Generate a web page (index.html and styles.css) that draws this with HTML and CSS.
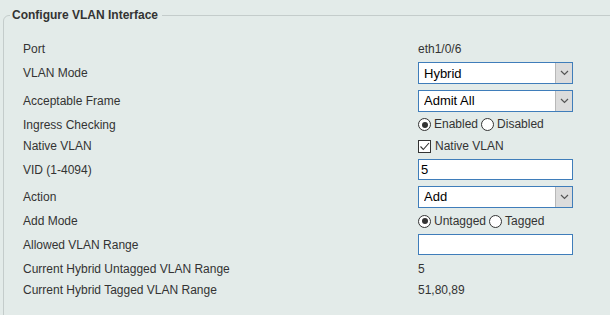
FILE: index.html
```html
<!DOCTYPE html>
<html>
<head>
  <title>Configure VLAN Interface</title>
  <link rel="stylesheet" href="styles.css">
</head>
<body>
  <fieldset class="panel">
    <legend class="panelTitle">Configure VLAN Interface</legend>
    <div class="rows">
      <!-- Port -->
      <div class="row">
        <span class="label">Port</span>
        <span class="value">eth1/0/6</span>
      </div>
      <div class="row">
        <span class="label">VLAN Mode</span>
        <div class="dropdown">
          <select><option>Hybrid</option><option>Access</option><option>Trunk</option></select>
          <span class="dropBtn"><svg width="9" height="6" viewBox="0 0 9 6"><path d="M1 1 L4.5 4.5 L8 1" fill="none" stroke="#555" stroke-width="1.2"/></svg></span>
        </div>
      </div>
      <div class="row">
        <span class="label">Acceptable Frame</span>
        <div class="dropdown">
          <select><option>Admit All</option><option>Tagged Only</option></select>
          <span class="dropBtn"><svg width="9" height="6" viewBox="0 0 9 6"><path d="M1 1 L4.5 4.5 L8 1" fill="none" stroke="#555" stroke-width="1.2"/></svg></span>
        </div>
      </div>
      <div class="row">
        <span class="label">Ingress Checking</span>
        <div class="choices">
          <span class="radio on"></span><span class="choiceText">Enabled</span>
          <span class="radio"></span><span class="choiceText">Disabled</span>
        </div>
      </div>
      <div class="row">
        <span class="label">Native VLAN</span>
        <div class="choices">
          <span class="check"><svg width="11" height="11" viewBox="0 0 11 11"><path d="M1.5 5.5 L4.3 8.5 L10 2" fill="none" stroke="#333" stroke-width="1.1"/></svg></span><span class="choiceText">Native VLAN</span>
        </div>
      </div>
      <div class="row">
        <span class="label">VID (1-4094)</span>
        <input type="text" class="textBox" value="5">
      </div>
      <div class="row">
        <span class="label">Action</span>
        <div class="dropdown">
          <select><option>Add</option><option>Remove</option></select>
          <span class="dropBtn"><svg width="9" height="6" viewBox="0 0 9 6"><path d="M1 1 L4.5 4.5 L8 1" fill="none" stroke="#555" stroke-width="1.2"/></svg></span>
        </div>
      </div>
      <div class="row">
        <span class="label">Add Mode</span>
        <div class="choices">
          <span class="radio on"></span><span class="choiceText">Untagged</span>
          <span class="radio"></span><span class="choiceText">Tagged</span>
        </div>
      </div>
      <div class="row">
        <span class="label">Allowed VLAN Range</span>
        <input type="text" class="textBox" value="">
      </div>
      <div class="row">
        <span class="label">Current Hybrid Untagged VLAN Range</span>
        <span class="value">5</span>
      </div>
      <div class="row">
        <span class="label">Current Hybrid Tagged VLAN Range</span>
        <span class="value">51,80,89</span>
      </div>
    </div>
  </fieldset>
</body>
</html>
```
FILE: styles.css
```css
body {
  margin: 0;
  padding: 0;
  background: #e3ebe9;
  font-family: "Liberation Sans", Arial, sans-serif;
  font-size: 12px;
  color: #333;
  overflow: hidden;
  height: 315px;
}
.panel {
  margin: 8px 0 0 3px;
  padding: 19px 0 0 0;
  width: 700px;
  min-height: 340px;
  border: 1px solid #c4cccb;
  border-radius: 6px;
  box-sizing: border-box;
}
.panelTitle {
  margin-left: 6px;
  padding: 0 4px 0 2px;
  font-weight: bold;
  font-size: 12px;
  line-height: 14px;
  color: #333;
}
.rows {
  display: flex;
  flex-direction: column;
  gap: 5.3px;
  padding-left: 19px;
}
.row {
  display: grid;
  grid-template-columns: 395px 155px;
  align-items: center;
  min-height: 16px;
}
.label, .value {
  line-height: 16px;
}
.dropdown {
  display: flex;
  height: 22px;
  box-sizing: border-box;
  border: 1px solid #3f7dba;
  background: #fff;
}
.dropdown select {
  flex: 1;
  border: none;
  outline: none;
  background: #fff;
  -webkit-appearance: none;
  appearance: none;
  font-family: "Liberation Sans", Arial, sans-serif;
  font-size: 13px;
  color: #000;
  padding: 0 0 0 5px;
  margin: 0;
}
.dropBtn {
  width: 16px;
  background: #dcdcdc;
  border-left: 1px solid #b8b8b8;
  display: flex;
  align-items: center;
  justify-content: center;
}
.textBox {
  height: 21px;
  box-sizing: border-box;
  border: 1px solid #3f7dba;
  background: #fff;
  font-family: "Liberation Sans", Arial, sans-serif;
  font-size: 13px;
  color: #000;
  padding: 0 2px;
  margin: 0;
  outline: none;
  width: 155px;
}
.choices {
  display: flex;
  align-items: center;
  line-height: 15px;
}
.radio {
  width: 11px;
  height: 11px;
  border: 1px solid #333;
  border-radius: 50%;
  background: #fff;
  margin-right: 3px;
  display: flex;
  align-items: center;
  justify-content: center;
}
.radio.on::after {
  content: "";
  width: 6px;
  height: 6px;
  border-radius: 50%;
  background: #333;
}
.check {
  width: 11px;
  height: 11px;
  border: 1px solid #333;
  background: #fff;
  margin-right: 4px;
  display: flex;
}
.choiceText {
  margin-right: 3px;
}
```
